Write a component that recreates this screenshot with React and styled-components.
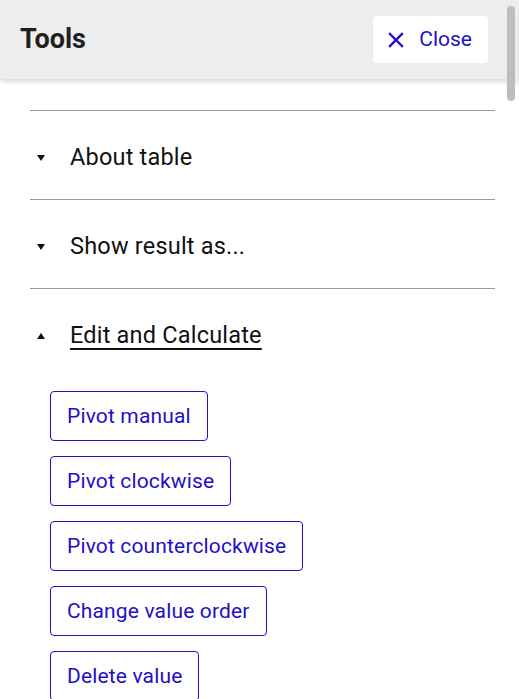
import React from "react";
import styled, { createGlobalStyle } from "styled-components";

const Global = createGlobalStyle`
  html, body { margin: 0; padding: 0; background: #fff; overflow: hidden; }
  body { font-family: Roboto, "Noto Sans", "Liberation Sans", sans-serif; color: #162327; }
  * { box-sizing: border-box; }
`;

const BLUE = "#2410c4";

const Page = styled.div`
  position: relative;
  width: 519px;
  height: 699px;
  overflow: hidden;
`;

const Header = styled.header`
  height: 79px;
  background: #ededed;
  display: flex;
  align-items: center;
  justify-content: space-between;
  padding: 0 31px 0 20px;
  box-shadow: 0 2px 6px rgba(0, 0, 0, 0.18);
  position: relative;
  z-index: 1;
`;

const Title = styled.h2`
  margin: 0;
  font-size: 27px;
  line-height: 1;
  font-weight: 700;
  color: #1f1f1f;
`;

const CloseButton = styled.button`
  display: flex;
  align-items: center;
  gap: 15px;
  height: 47px;
  padding: 0 16px 0 15px;
  background: #fff;
  border: none;
  border-radius: 4px;
  color: ${BLUE};
  font-family: inherit;
  font-size: 21px;
  line-height: 1;
  cursor: pointer;
`;

const Body = styled.div`
  padding: 31px 24px 0 30px;
`;

const Section = styled.section`
  border-top: 1px solid #999;
`;

const SectionHead = styled.button`
  display: flex;
  align-items: center;
  gap: 24px;
  width: 100%;
  height: 88px;
  padding: 6px 0 0 6px;
  border: none;
  background: none;
  font-family: inherit;
  font-size: 23.5px;
  letter-spacing: 0.2px;
  line-height: 1;
  color: #111;
  text-align: left;
  cursor: pointer;
`;

const Label = styled.span`
  text-decoration: ${(p) => (p.$open ? "underline" : "none")};
  text-decoration-thickness: 2px;
  text-underline-offset: 5px;
`;

const Buttons = styled.div`
  display: flex;
  flex-direction: column;
  align-items: flex-start;
  gap: 15px;
  padding: 14px 0 40px 20px;
`;

const ToolButton = styled.button`
  height: 50px;
  padding: 0 16px;
  border: 1px solid ${BLUE};
  border-radius: 4px;
  background: #fff;
  color: ${BLUE};
  font-family: inherit;
  font-size: 21px;
  letter-spacing: 0.15px;
  line-height: 1;
  cursor: pointer;
`;

const ScrollThumb = styled.div`
  position: absolute;
  top: 6px;
  right: 4px;
  width: 8px;
  height: 95px;
  border-radius: 4px;
  background: #bdbdbd;
  z-index: 2;
`;

const Caret = ({ up }) => (
  <svg width="10" height="8" viewBox="0 0 10 8" aria-hidden="true">
    {up ? <path d="M1 7 L5 1 L9 7 Z" fill="#111" /> : <path d="M1 1 L9 1 L5 7 Z" fill="#111" />}
  </svg>
);

const XIcon = () => (
  <svg width="16" height="16" viewBox="0 0 16 16" aria-hidden="true">
    <path d="M2 2 L14 14 M14 2 L2 14" stroke={BLUE} strokeWidth="2.4" strokeLinecap="square" />
  </svg>
);

const tools = [
  "Pivot manual",
  "Pivot clockwise",
  "Pivot counterclockwise",
  "Change value order",
  "Delete value",
];

export default function App() {
  return (
    <Page>
      <Global />
      <Header>
        <Title>Tools</Title>
        <CloseButton>
          <XIcon />
          Close
        </CloseButton>
      </Header>
      <Body>
        <Section>
          <SectionHead>
            <Caret />
            <Label>About table</Label>
          </SectionHead>
        </Section>
        <Section>
          <SectionHead>
            <Caret />
            <Label>Show result as...</Label>
          </SectionHead>
        </Section>
        <Section>
          <SectionHead>
            <Caret up />
            <Label $open>Edit and Calculate</Label>
          </SectionHead>
          <Buttons>
            {tools.map((t) => (
              <ToolButton key={t}>{t}</ToolButton>
            ))}
          </Buttons>
        </Section>
      </Body>
      <ScrollThumb />
    </Page>
  );
}
